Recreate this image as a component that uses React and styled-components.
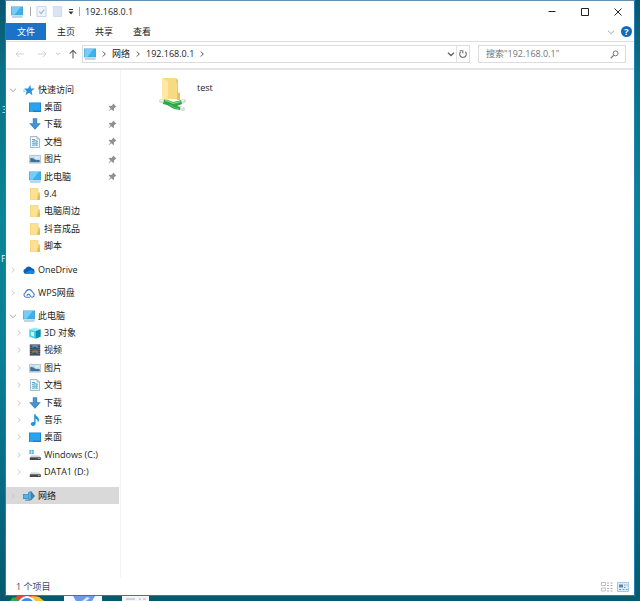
import React, { useState } from "react";
import styled, { createGlobalStyle } from "styled-components";

const GlobalStyle = createGlobalStyle`
  * {
    box-sizing: border-box;
  }
  body {
    margin: 0;
    font-family: "Open Sans", "Noto Sans CJK SC", sans-serif;
    font-size: 9px;
    line-height: 12px;
    color: #1b1b1b;
  }
  button, input {
    font: inherit;
    color: inherit;
    border: 0;
    padding: 0;
    margin: 0;
    background: none;
  }
  svg {
    display: block;
    flex: none;
  }
`;

const Desktop = styled.div`
  position: relative;
  display: flex;
  flex-direction: column;
  min-height: 100vh;
  padding: 0 5px;
  overflow: hidden;
  background: linear-gradient(
    to bottom,
    #08566f 0%,
    #0b7186 12%,
    #088596 36%,
    #087f95 60%,
    #07657f 85%,
    #065a6c 100%
  );
`;

const Shortcut = styled.span`
  position: absolute;
  left: ${(props) => props.$left}px;
  top: ${(props) => props.$top}px;
  color: #e4f1f4;
`;

const Window = styled.main`
  position: relative;
  flex: 1;
  display: flex;
  flex-direction: column;
  background: #fff;
  border: 1px solid #1e83bd;
  border-top-color: #6590b2;
`;

const TitleBar = styled.header`
  display: flex;
  align-items: center;
  height: 21px;
  padding-left: 5px;
`;

const Title = styled.h1`
  margin: 0 0 0 5px;
  font-size: 9px;
  font-weight: 400;
`;

const Separator = styled.span`
  width: 1px;
  height: 9px;
  background: #a9a9a9;
`;

const QuickTools = styled.div`
  display: flex;
  align-items: center;
  gap: 5px;
  margin: 0 5px 0 7px;
`;

const IconButton = styled.button`
  display: flex;
  align-items: center;
  justify-content: center;
  width: ${(props) => props.$width}px;
  height: 16px;
`;

const WindowButtons = styled.div`
  display: flex;
  margin-left: auto;
`;

const Ribbon = styled.nav`
  display: flex;
  align-items: center;
  height: 20px;
  padding-right: 2px;
  border-bottom: 1px solid #dedfe0;
`;

const Tab = styled.button`
  width: 38px;
  height: 17px;
`;

const FileTab = styled(Tab)`
  width: 40px;
  margin-right: 1px;
  background: #1a73c6;
  color: #fff;
`;

const RibbonEnd = styled.div`
  display: flex;
  align-items: center;
  margin-left: auto;
`;

const Help = styled.button`
  width: 11px;
  height: 11px;
  border-radius: 50%;
  background: #0b6cc0;
  color: #fff;
  font-size: 9px;
  font-weight: 700;
  line-height: 11px;
`;

const AddressRow = styled.div`
  display: flex;
  align-items: center;
  height: 28px;
  padding: 0 8px 2px 3px;
  border-bottom: 2px solid #e5e5e5;
`;

const AddressBar = styled.div`
  flex: 1;
  display: flex;
  align-items: center;
  gap: 4px;
  height: 18px;
  padding-left: 1px;
  border: 1px solid #dcdcdc;
`;

const Crumb = styled.button`
  white-space: nowrap;
`;

const AddressEnd = styled.div`
  display: flex;
  align-self: stretch;
  align-items: center;
  margin-left: auto;
`;

const RefreshBox = styled.div`
  display: flex;
  align-items: center;
  align-self: stretch;
  border-left: 1px solid #e2e2e2;
`;

const SearchBox = styled.label`
  display: flex;
  align-items: center;
  width: 24%;
  height: 18px;
  margin-left: 8px;
  padding: 0 6px 0 7px;
  border: 1px solid #dcdcdc;
`;

const SearchInput = styled.input`
  flex: 1;
  min-width: 0;
  outline: none;
  &::placeholder {
    color: #747474;
    opacity: 1;
  }
`;

const Body = styled.div`
  flex: 1;
  display: flex;
`;

const Sidebar = styled.nav`
  display: flex;
  flex-direction: column;
  gap: 6px;
  width: 115px;
  padding: 11px 1px 11px 0;
  border-right: 1px solid #f2f2f2;
`;

const Group = styled.ul`
  display: grid;
  grid-auto-rows: 1fr;
  min-height: ${(props) => (props.$tall ? 174 : 17)}px;
  margin: 0;
  padding: 0;
  list-style: none;
`;

const Row = styled.button`
  display: flex;
  align-items: center;
  width: 100%;
  height: 100%;
  padding: 0 2px 0 ${(props) => (props.$child ? 9 : 3)}px;
  background: ${(props) => (props.$selected ? "#d9d9d9" : "transparent")};
  text-align: left;
  white-space: nowrap;
`;

const Toggle = styled.span`
  width: 8px;
  margin-right: 6px;
`;

const RowLabel = styled.span`
  flex: 1;
  margin-left: 3px;
`;

const Files = styled.section`
  flex: 1;
  padding: 7px 38px;
`;

const FileItem = styled.button`
  display: flex;
  gap: 10px;
  text-align: left;
`;

const FileName = styled.span`
  padding-top: 5px;
`;

const StatusBar = styled.footer`
  display: flex;
  align-items: center;
  justify-content: space-between;
  height: 17px;
  padding: 0 4px 0 10px;
  color: #3c4c66;
`;

const ViewModes = styled.div`
  display: flex;
  gap: 2px;
`;

const Taskbar = styled.div`
  display: flex;
  align-items: flex-start;
  gap: 20px;
  height: 5px;
  padding-left: 5px;
  overflow: hidden;
`;

const Icon = ({ size = 12, children }) => (
  <svg width={size} height={size} viewBox="0 0 12 12" fill="none" aria-hidden="true">
    {children}
  </svg>
);

const Chevron = ({ dir = "right", color = "#555", width = 1 }) => (
  <svg width="8" height="8" viewBox="0 0 8 8" fill="none" stroke={color} strokeWidth={width} aria-hidden="true">
    <path d={dir === "down" ? "M1 2.7 4 5.6 7 2.7" : "M2.800 1.500 5.300 4 2.800 6.500"} />
  </svg>
);

const Computer = () => (
  <Icon>
    <path d="M0 .5h12v9H0z" fill="#4a9fce" />
    <path d="M.6 1.100h10.800v7.600H.6z" fill="#3cb2ec" />
    <path d="M.6 1.100h9L3.600 8.700h-3z" fill="#78cdf6" />
    <path d="M0 9.500h12v1H0z" fill="#e3edf2" />
    <path d="M1 10.500h10.500v1H1z" fill="#86b3cb" />
  </Icon>
);

const Star = () => (
  <Icon>
    <path d="m7.400.8.400 3.600 4 .2-3.200 2.400.8 4.200-3.200-2.400-3.800 2.400 1.200-4L1.200 4.600l3.800-.2z" fill="#2b91d9" />
    <path d="M0 6h2.600M.2 7.600h2.200" stroke="#7fc0ea" strokeWidth=".8" />
  </Icon>
);

const DesktopIcon = () => (
  <Icon>
    <path d="M0 1.500h12v9.500H0z" fill="#1580cf" />
    <path d="M.7 2.200h10.600v7.400H.7z" fill="#27a3f0" />
    <path d="M1 10.200h3" stroke="#9bd2f5" strokeWidth=".6" />
  </Icon>
);

const Download = () => (
  <Icon>
    <path d="M3.800.3h4.400v5h3.600L6 11.800.2 5.300h3.600z" fill="#3a84c4" />
    <path d="M4.600 1h2.800v5.100h2.300L6 10.300 2.300 6.100h2.300z" fill="#4795d6" />
  </Icon>
);

const Doc = () => (
  <Icon>
    <path d="M1.500.5H8L10.500 3v8.500h-9z" fill="#f1f8fc" stroke="#8babc0" strokeWidth=".8" />
    <path d="M8 .5V3h2.500" stroke="#8babc0" strokeWidth=".7" />
    <path d="M3 3.500h3M3 5.300h2.500M6.500 5.300H9M3 7.200h6M3 9.200h2.500M6.500 9.200H9" stroke="#4c9cc7" strokeWidth=".9" />
    <path d="M5 4.500h2.500v4.500H5z" stroke="#77b5d5" strokeWidth=".8" />
  </Icon>
);

const Picture = () => (
  <Icon>
    <path d="M.4 2.400h11.200v7.700H.4z" fill="#f5f9fc" stroke="#9aabb7" strokeWidth=".7" />
    <path d="M1.300 3.300h9.400v5.900H1.300z" fill="#b5d9ee" />
    <path d="M1.300 5.200c2-.6 3.500.8 5 1.600s3-.1 4.400.4v2H1.300z" fill="#3f6f93" />
    <path d="M6.200 4.200h3.500v1.200H6.200z" fill="#f3faff" />
  </Icon>
);

const Folder = () => (
  <Icon>
    <path d="M1 .3h8.300v4.200h1.700v7.200H1z" fill="#f0cb66" />
    <path d="M1.500.8h7.200v10.400H1.500z" fill="#ffe193" />
    <path d="M9 7.500h2v4.200H8z" fill="#e6bb50" />
  </Icon>
);

const OneDrive = () => (
  <Icon>
    <path d="M3 10a2.700 2.700 0 0 1-.6-5.300A3.600 3.600 0 0 1 8.900 4.300 2.900 2.900 0 0 1 9.400 10z" fill="#0b5fb4" />
    <path d="M1.500 9.500 7.500 6l4.300 1.400c-.2 1.700-1.200 2.600-2.400 2.600H3z" fill="#1c88dc" />
  </Icon>
);

const Wps = () => (
  <Icon>
    <path
      d="M6.500 10.300H3A2.500 2.500 0 0 1 2.600 5.500 3.500 3.500 0 0 1 9.400 5.200 2.700 2.700 0 0 1 9.300 10.300C8 10.300 7.400 8.900 6.500 7.700 5.600 6.500 4 7.200 4 8.500"
      stroke="#4079c4"
      strokeWidth="1.100"
      strokeLinecap="round"
    />
  </Icon>
);

const Cube = () => (
  <Icon>
    <path d="M.3 2.300 6.300.4l5.400 1.900L6.500 4z" fill="#9ceaf1" />
    <path d="M.3 2.300 6.500 4v7.700L.3 9.700z" fill="#48cfe0" />
    <path d="m6.500 4 5.200-1.700v7.400l-5.200 2z" fill="#078fb0" />
    <path d="m2 4.600 3 .9v4l-3-.9z" fill="#c9f5f8" />
  </Icon>
);

const Film = () => (
  <Icon>
    <path d="M.8.4h10.400v11.200H.8z" fill="#3f444c" />
    <path d="M3.200 1h5.600v4.600H3.200z" fill="#6690b7" />
    <path d="M3.200 6.400h5.600V11H3.200z" fill="#8b8153" />
    <path d="M3.200 3.800 6 2.400l2.800 2v1.200H3.200zM3.200 9.300 6 7.900l2.800 2V11H3.200z" fill="#2e5373" />
    <path d="M2 1.200v10M10 1.200v10" stroke="#b4bbc0" strokeWidth=".7" strokeDasharray="1 1" />
  </Icon>
);

const Music = () => (
  <Icon>
    <path d="M5.200.3h1.400c.1 2.200 3.700 2.900 3.400 5.600-.1 1.100-.7 2-1.400 2.700.5-2.200-.6-3.300-2-3.800v4.800c0 1.400-1.200 2.300-2.500 2.300S1.800 11 1.800 10c0-1.300 1.500-2.400 3.400-2z" fill="#1a98df" />
  </Icon>
);

const Drive = ({ system }) => (
  <Icon>
    {system && (
      <path d="M.3 1h2v1.800h-2zM2.800 1h2v1.800h-2zM.3 3.300h2v1.800h-2zM2.800 3.300h2v1.800h-2z" fill="#45b5e4" />
    )}
    <path d="m2.200 6.300 8 .1 1.600 2.100H.8z" fill="#d2d6d8" />
    <path d="M.8 8.300h11V11H.8z" fill="#46494c" />
    <path d="M9 9.300h1.700v.8H9z" fill="#b3d9d0" />
  </Icon>
);

const Network = () => (
  <Icon>
    <path d="M0 4h7v5H0z" fill="#2291d5" />
    <path d="M.6 4.600h5.400v3.600H.6z" fill="#4db9ef" />
    <path d="M2 9.400h5v1.600H2z" fill="#7ca7be" />
    <path d="m5 2.500 3-1.500 4 5-4 4.500-3-1z" fill="#3784ba" />
    <path d="m5.500 3 2.200-1.100v7.600l-2.200-.6z" fill="#62b1dc" />
  </Icon>
);

const Pin = () => (
  <Icon size={9}>
    <path d="m7 .8 4.200 4.200-1.400.5-1.900 1.900.1 2.600-1 .8-2.600-2.600L1 11l-.3-.3 2.800-3.400L1 4.800l.9-1 2.600.2 1.900-1.900z" fill="#8d9296" />
  </Icon>
);

const SharedFolder = () => (
  <svg width="28" height="35" viewBox="0 0 28 35" aria-hidden="true">
    <path d="M4 1h13l2 2v12l2 2v5H4z" fill="#edc768" />
    <path d="M4 1h13v4l1 1v16H4z" fill="#f8da82" />
    <path d="m3 1 6 3v20l-6-2z" fill="#ffe7a6" />
    <path d="M18 16h3v7h-3z" fill="#e9bf59" />
    <path d="m2 24 4 1M22 25l3-1M21 31l3 1" stroke="#d5ded9" strokeWidth="4" strokeLinecap="round" />
    <path d="m5 22.500 4 .5 5 2 5-1 3-1 1 4-5 2 3 1v3l-6-1-7-4-4-1z" fill="#2da549" />
    <path d="m6 23.700 3 .3 5 2.300 5-1 2.500-1" stroke="#7fd68c" strokeWidth="1.300" fill="none" />
    <path d="m10 27.500 5 3 5 1.500" stroke="#58c56d" strokeWidth="1" fill="none" />
    <path d="m1.500 23.300 3 .7M22.500 24l2.500-.7M22 30.500l2 .5" stroke="#fff" strokeWidth="1" />
  </svg>
);

const quickAccess = [
  { label: "快速访问", icon: Star, open: true },
  { label: "桌面", icon: DesktopIcon, child: true, pinned: true },
  { label: "下载", icon: Download, child: true, pinned: true },
  { label: "文档", icon: Doc, child: true, pinned: true },
  { label: "图片", icon: Picture, child: true, pinned: true },
  { label: "此电脑", icon: Computer, child: true, pinned: true },
  { label: "9.4", icon: Folder, child: true },
  { label: "电脑周边", icon: Folder, child: true },
  { label: "抖音成品", icon: Folder, child: true },
  { label: "脚本", icon: Folder, child: true },
];

const thisPc = [
  { label: "此电脑", icon: Computer, open: true },
  { label: "3D 对象", icon: Cube, child: true, toggle: true },
  { label: "视频", icon: Film, child: true, toggle: true },
  { label: "图片", icon: Picture, child: true, toggle: true },
  { label: "文档", icon: Doc, child: true, toggle: true },
  { label: "下载", icon: Download, child: true, toggle: true },
  { label: "音乐", icon: Music, child: true, toggle: true },
  { label: "桌面", icon: DesktopIcon, child: true, toggle: true },
  { label: "Windows (C:)", icon: () => <Drive system />, child: true, toggle: true },
  { label: "DATA1 (D:)", icon: Drive, child: true, toggle: true },
];

const groups = [
  quickAccess,
  [{ label: "OneDrive", icon: OneDrive, toggle: true }],
  [{ label: "WPS网盘", icon: Wps, toggle: true }],
  thisPc,
  [{ label: "网络", icon: Network, toggle: true }],
];

function TreeGroup({ items, selected, onSelect, id }) {
  return (
    <Group $tall={items.length > 1}>
      {items.map((item, i) => {
        const ItemIcon = item.icon;
        const key = id + "-" + i;
        return (
          <li key={key}>
            <Row $child={item.child} $selected={selected === key} onClick={() => onSelect(key)}>
              <Toggle>
                {item.open && <Chevron dir="down" color="#a8a8a8" />}
                {item.toggle && <Chevron color="#c8c8c8" />}
              </Toggle>
              <ItemIcon />
              <RowLabel>{item.label}</RowLabel>
              {item.pinned && <Pin />}
            </Row>
          </li>
        );
      })}
    </Group>
  );
}

export default function App() {
  const [selected, setSelected] = useState("4-0");
  const [query, setQuery] = useState("");

  return (
    <Desktop>
      <GlobalStyle />
      <Shortcut $left={2} $top={104}>3</Shortcut>
      <Shortcut $left={1} $top={253}>F</Shortcut>
      <Window>
        <TitleBar>
          <Computer />
          <QuickTools>
            <Separator />
            <IconButton $width={11} aria-label="属性">
              <Icon size={11}>
                <path d="M1 .5h10v11H1z" fill="#eef4fb" stroke="#c3d3e5" />
                <path d="m3.500 6 2 2.300L9 4" stroke="#9db4cf" strokeWidth="1.200" />
              </Icon>
            </IconButton>
            <IconButton $width={11} aria-label="新建文件夹">
              <Icon size={11}>
                <path d="M1.500.5h9v11h-9z" fill="#d9e5f5" stroke="#cbdaee" />
              </Icon>
            </IconButton>
            <IconButton $width={6} aria-label="自定义快速访问工具栏">
              <svg width="6" height="6" viewBox="0 0 6 6">
                <path d="M1 0h4v1H1zM.5 2.500h5L3 5.500z" fill="#333" />
              </svg>
            </IconButton>
          </QuickTools>
          <Separator />
          <Title>192.168.0.1</Title>
          <WindowButtons>
            <IconButton $width={33} aria-label="最小化">
              <svg width="8" height="8" viewBox="0 0 8 8" stroke="#222">
                <path d="M.5 3.500h7" />
              </svg>
            </IconButton>
            <IconButton $width={33} aria-label="最大化">
              <svg width="8" height="8" viewBox="0 0 8 8" stroke="#222" fill="none">
                <path d="M.5.500h7v7h-7z" />
              </svg>
            </IconButton>
            <IconButton $width={33} aria-label="关闭">
              <svg width="8" height="8" viewBox="0 0 8 8" stroke="#222">
                <path d="m.5.500 7 7m0-7-7 7" />
              </svg>
            </IconButton>
          </WindowButtons>
        </TitleBar>
        <Ribbon>
          <FileTab>文件</FileTab>
          <Tab>主页</Tab>
          <Tab>共享</Tab>
          <Tab>查看</Tab>
          <RibbonEnd>
            <IconButton $width={20} aria-label="展开功能区">
              <Chevron dir="down" color="#a5a5a5" />
            </IconButton>
            <Help aria-label="帮助">?</Help>
          </RibbonEnd>
        </Ribbon>
        <AddressRow>
          <IconButton $width={22} aria-label="后退">
            <Icon size={10}>
              <path d="M11 6H1.500M5 2.300 1.300 6 5 9.700" stroke="#c9c9c9" />
            </Icon>
          </IconButton>
          <IconButton $width={22} aria-label="前进">
            <Icon size={10}>
              <path d="M1 6h9.500M7 2.300 10.700 6 7 9.700" stroke="#c9c9c9" />
            </Icon>
          </IconButton>
          <IconButton $width={10} aria-label="最近浏览的位置">
            <svg width="4" height="4" viewBox="0 0 4 4" stroke="#c4c4c4" fill="none">
              <path d="m0 1 2 1.500L4 1" />
            </svg>
          </IconButton>
          <IconButton $width={19} aria-label="上移">
            <Icon size={10}>
              <path d="M6 11.500V1.500M2 5.500l4-4 4 4" stroke="#666" strokeWidth="1.400" />
            </Icon>
          </IconButton>
          <AddressBar>
            <Computer />
            <Chevron />
            <Crumb>网络</Crumb>
            <Chevron />
            <Crumb>192.168.0.1</Crumb>
            <Chevron />
            <AddressEnd>
              <IconButton $width={10} aria-label="以前的位置">
                <Chevron dir="down" width={1.4} color="#666" />
              </IconButton>
              <RefreshBox>
                <IconButton $width={12} aria-label="刷新">
                  <Icon size={10}>
                    <path d="M8.800 3.300A4 4 0 1 1 3.200 3.300" stroke="#777" strokeWidth="1.400" />
                    <path d="M2 2h3.800v3.500" stroke="#777" strokeWidth="1.300" />
                  </Icon>
                </IconButton>
              </RefreshBox>
            </AddressEnd>
          </AddressBar>
          <SearchBox>
            <SearchInput
              aria-label="搜索"
              placeholder={'搜索"192.168.0.1"'}
              value={query}
              onChange={(e) => setQuery(e.target.value)}
            />
            <Icon size={9}>
              <circle cx="7.500" cy="4.500" r="3.300" stroke="#777" strokeWidth="1.300" />
              <path d="M5 7 1 11" stroke="#777" strokeWidth="1.500" />
            </Icon>
          </SearchBox>
        </AddressRow>
        <Body>
          <Sidebar>
            {groups.map((items, i) => (
              <TreeGroup key={i} id={i} items={items} selected={selected} onSelect={setSelected} />
            ))}
          </Sidebar>
          <Files>
            <FileItem>
              <SharedFolder />
              <FileName>test</FileName>
            </FileItem>
          </Files>
        </Body>
        <StatusBar>
          <span>1 个项目</span>
          <ViewModes>
            <IconButton $width={14} aria-label="详细信息">
              <Icon>
                <path d="M.5 1.500h4v3h-4zM.5 7h4v3h-4z" stroke="#b0b0b0" strokeWidth=".8" />
                <path d="M6 2h2M9.500 2h2M6 4.500h2M9.500 4.500h2M6 7.500h2M9.500 7.500h2M6 10h2M9.500 10h2" stroke="#aaa" />
              </Icon>
            </IconButton>
            <IconButton $width={14} aria-label="大图标">
              <Icon>
                <path d="M.5 1.500h11v9H.5z" fill="#dceefb" stroke="#a3c8e6" />
                <path d="M2 3.500h4v3H2z" fill="#6286aa" />
                <path d="M7 4h1.500M9.500 4h1M7 6.500h1.500M2 8.500h2M5.500 8.500h2M9 8.500h1.500" stroke="#7d98b5" />
              </Icon>
            </IconButton>
          </ViewModes>
        </StatusBar>
      </Window>
      <Taskbar>
        <svg width="34" height="5" viewBox="0 0 34 5">
          <path d="M0 5C4 2 8-2 17-2s13 4 17 7z" fill="#e04b39" />
          <path d="M0 5 3 1l7 4z" fill="#35a853" />
          <path d="m21 0 8 1 5 4H24z" fill="#f7c52f" />
          <circle cx="17" cy="9" r="9" fill="#fff" />
          <circle cx="17" cy="9" r="7" fill="#4787e8" />
        </svg>
        <svg width="38" height="5" viewBox="0 0 38 5">
          <path d="M0 0h38v5H0z" fill="#f6f9fd" />
          <path d="M9 0h22l-3 5H12z" fill="#6d9ae8" />
          <path d="m18 5 5-4 3 1-4 3z" fill="#dce8fb" />
        </svg>
        <svg width="27" height="5" viewBox="0 0 27 5">
          <path d="M0 0h27v5H0z" fill="#f4f5f5" />
          <path d="M4 3h9M17 3h2" stroke="#a9adb0" />
          <path d="M21 3h3" stroke="#e4a49a" />
        </svg>
      </Taskbar>
    </Desktop>
  );
}
